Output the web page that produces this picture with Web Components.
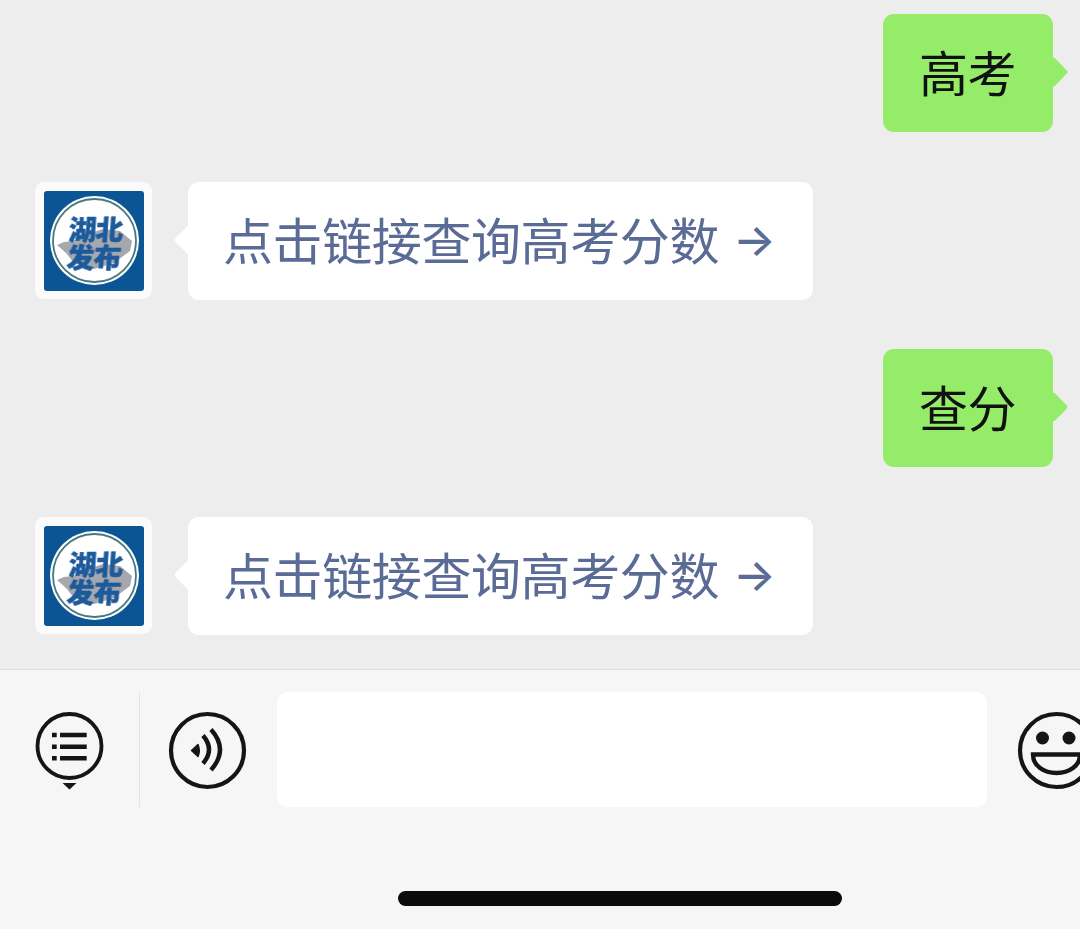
<!DOCTYPE html>
<html lang="zh-CN"><head><meta charset="utf-8"><title>高考查分</title>
<style>
html,body{margin:0;padding:0;height:100%;overflow:hidden;background:#ededed;font-family:"Noto Sans CJK SC","Liberation Sans",sans-serif}
body{display:flex;flex-direction:column;height:929px}
.arrow{font-family:Inter,"Noto Sans CJK SC",sans-serif;font-size:45px;margin:3px 0 0 14px;font-weight:500;line-height:1}
</style></head><body>
<chat-thread>
  <chat-row side="right"><chat-bubble side="right">高考</chat-bubble></chat-row>
  <chat-row><chat-avatar></chat-avatar><chat-bubble side="left" link>点击链接查询高考分数<span class="arrow">→</span></chat-bubble></chat-row>
  <chat-row side="right"><chat-bubble side="right">查分</chat-bubble></chat-row>
  <chat-row><chat-avatar></chat-avatar><chat-bubble side="left" link>点击链接查询高考分数<span class="arrow">→</span></chat-bubble></chat-row>
</chat-thread>
<chat-footer></chat-footer>
<script>
function def(name, html){
  customElements.define(name, class extends HTMLElement{
    constructor(){super();this.attachShadow({mode:'open'}).innerHTML=html;}
  });
}
def('chat-thread',`<style>:host{display:flex;flex-direction:column;gap:49.67px;box-sizing:border-box;height:669px;padding:14px 0 0;background:#ededed;flex:none}</style><slot></slot>`);
def('chat-row',`<style>:host{display:flex;align-items:flex-start;gap:36px;height:118px;padding:0 27px 0 35px}:host([side=right]){justify-content:flex-end}</style><slot></slot>`);
def('chat-bubble',`<style>
:host{display:flex;align-items:center;position:relative;box-sizing:border-box;height:118px;padding:0 35px 5px;border-radius:11px;font-size:50px;line-height:1;white-space:nowrap;color:#111;letter-spacing:-.4px}
:host([side=right]){background:#95ec69;width:170px;font-size:49px;padding-left:36px}
:host([side=left]){background:#fff;width:625px}
:host([link]){color:#5a6b95}
:host::after{content:"";position:absolute;top:50%;width:22px;height:22px;margin-top:-12px;transform:rotate(45deg);border-radius:3px;background:inherit}
:host([side=right])::after{right:-10.500px}
:host([side=left])::after{left:-10.500px}
</style><slot></slot>`);
def('chat-avatar',`<style>:host{display:flex;align-items:center;justify-content:center;position:relative;flex:none;width:117px;height:117px;padding-top:1px;box-sizing:border-box;background:#fbfbfb;border-radius:9px}
svg{display:block;filter:blur(.35px)}
.name{position:absolute;left:33px;top:32px;width:58px;font-family:"Noto Sans CJK SC",sans-serif;font-weight:900;font-size:27.500px;line-height:28px;letter-spacing:-.5px;color:#1c5a9b;-webkit-text-stroke:.5px #1c5a9b;white-space:pre-line;transform:skewX(-4deg);filter:blur(.35px)}</style>
<svg width="100" height="100" viewBox="0 0 100 100"><rect width="100" height="100" rx="3" fill="#0b5595"/>
<circle cx="50.500" cy="49.500" r="44.500" fill="#fff"/><circle cx="50.500" cy="49.500" r="41.500" fill="#fff" stroke="#46787f" stroke-width="1.800"/>
<path d="M13 54l7-3 8-1 12-4 10-5 9-3 17 2 12 10-2 10-16 12-20 6-20-6-8-10-9-8z" fill="#a6a8ad"/></svg>
<div class="name">湖北
发布</div>`);
def('chat-footer',`<style>
:host{display:block;position:relative;box-sizing:border-box;height:260px;flex:none;background:#f6f6f6;border-top:1px solid #dfdfdf;overflow:hidden}
.bar{display:flex;align-items:flex-start;padding:22px 0 0 35px}
svg{display:block;flex:none}
.menu{width:69px;height:80px;margin:19px 35px 0 0}
.sep{width:1px;height:115px;background:#e4e4e4;flex:none;margin-right:28px}
.voice{width:79px;height:79px;margin:19px 30px 0 0}
.input{width:710px;height:115px;background:#fff;border-radius:10px;flex:none;margin-right:30px}
.emoji{width:79px;height:79px;margin-top:19px}
.home{position:absolute;left:398px;top:221px;width:444px;height:15px;border-radius:8px;background:#0b0b0b}
</style>
<div class="bar">
<svg class="menu" viewBox="0 0 69 80" fill="none" stroke="#151515"><circle cx="34.500" cy="35" r="32" stroke-width="3.800"/>
<path d="M17 24h4.700M17 35.700h4.700M17 47.300h4.700M25 24h26.700M25 35.700h26.700M25 47.300h26.700" stroke-width="4.400"/><path d="M27.500 72h14l-7 6.500z" fill="#151515" stroke="none"/></svg>
<div class="sep"></div>
<svg class="voice" viewBox="0 0 79 79" fill="none" stroke="#151515"><circle cx="39.500" cy="39.500" r="36.500" stroke-width="4.200"/>
<path d="M23.500 39.500l6.500-6q2.500 6 0 12z" fill="#151515" stroke="#151515" stroke-width="1.500" stroke-linejoin="round"/>
<path d="M35 24.500Q47 38.500 35 52.500M43 18.500Q61 38.500 43 59" stroke-width="4.400"/></svg>
<div class="input"></div>
<svg class="emoji" viewBox="0 0 79 79" fill="none" stroke="#151515"><circle cx="39.500" cy="39.500" r="36.500" stroke-width="4.200"/>
<circle cx="25.500" cy="27" r="6.500" fill="#151515" stroke="none"/><circle cx="52" cy="27" r="6.500" fill="#151515" stroke="none"/>
<path d="M16 43.500H63C63 55 52 62 39.500 62S16 55 16 43.500z" stroke-width="4.400"/></svg>
</div><div class="home"></div>`);
</script>
</body></html>
